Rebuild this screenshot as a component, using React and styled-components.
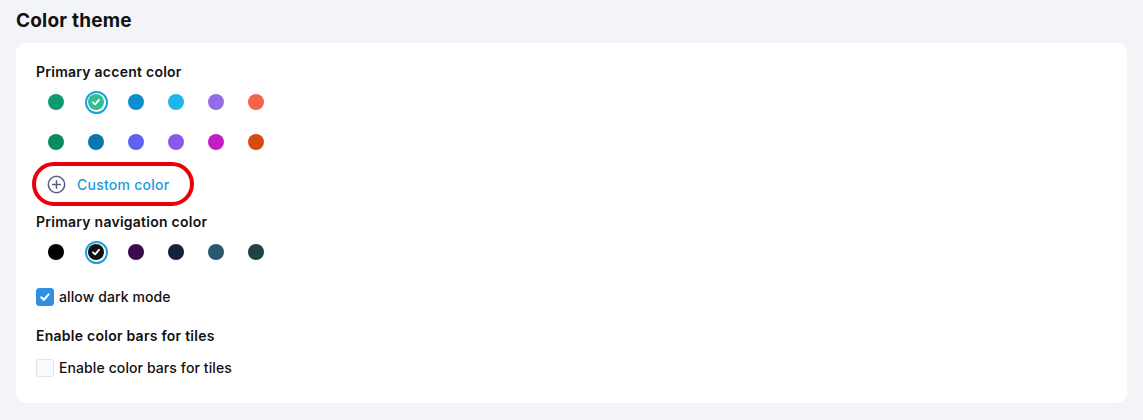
import React from 'react'
import styled, { createGlobalStyle } from 'styled-components'

const GlobalStyle = createGlobalStyle`
  body {
    margin: 0;
    background: #f3f4f8;
    font-family: Inter, "Liberation Sans", sans-serif;
    color: #111;
  }
`

const Page = styled.div`
  padding: 10px 16px 17px;
`

const Title = styled.h2`
  margin: 0 0 11px;
  font-size: 19px;
  font-weight: 700;
  line-height: 22px;
  letter-spacing: 0.2px;
`

const Card = styled.div`
  background: #fff;
  border-radius: 10px;
  padding: 19px 20px 25px;
`

const Label = styled.div`
  font-size: 14px;
  font-weight: 600;
  line-height: 20px;
  letter-spacing: 0.25px;
  margin-top: ${p => p.$top || 0}px;
`

const SwatchGrid = styled.div`
  display: grid;
  grid-template-columns: repeat(6, 40px);
  grid-auto-rows: 40px;
`

const SwatchCell = styled.div`
  display: flex;
  align-items: center;
  justify-content: center;
`

const Dot = styled.span`
  width: 16px;
  height: 16px;
  border-radius: 50%;
  background: ${p => p.$color};
  display: flex;
  align-items: center;
  justify-content: center;
`

const Ring = styled.span`
  width: 23px;
  height: 23px;
  border-radius: 50%;
  box-sizing: border-box;
  border: 2px solid #1ba0e0;
  padding: 1.5px;
  display: flex;
  align-items: center;
  justify-content: center;
  & > span {
    width: 16px;
    height: 16px;
  }
`

const CustomButton = styled.button`
  display: flex;
  align-items: center;
  gap: 11px;
  width: fit-content;
  height: 44px;
  box-sizing: border-box;
  margin: 0 0 6px -4px;
  padding: 0 21px 0 11px;
  border: 4px solid #e8000b;
  border-radius: 22px;
  background: #fff;
  color: #1a9be0;
  font-family: inherit;
  font-size: 14px;
  font-weight: 500;
  letter-spacing: 0.25px;
  cursor: pointer;
`

const CheckRow = styled.label`
  display: flex;
  align-items: center;
  gap: 5px;
  font-size: 14px;
  font-weight: 500;
  line-height: 20px;
  letter-spacing: 0.1px;
  margin-top: ${p => p.$top || 0}px;
`

const Box = styled.span`
  width: 18px;
  height: 18px;
  box-sizing: border-box;
  border-radius: 3px;
  display: flex;
  align-items: center;
  justify-content: center;
  background: ${p => (p.$checked ? '#2f8fe0' : '#fafbfc')};
  border: 1px solid ${p => (p.$checked ? '#2f8fe0' : '#e1e3ea')};
`

const Tick = ({ size = 10 }) => (
  <svg width={size} height={size} viewBox="0 0 10 10">
    <path d="M2 5.3 L4.1 7.3 L8 2.8" fill="none" stroke="#fff" strokeWidth="1.8" strokeLinecap="round" strokeLinejoin="round" />
  </svg>
)

const PlusCircle = () => (
  <svg width="19" height="19" viewBox="0 0 20 20">
    <circle cx="10" cy="10" r="8.6" fill="none" stroke="#5a5e87" strokeWidth="1.6" />
    <path d="M10 6 V14 M6 10 H14" stroke="#5a5e87" strokeWidth="1.6" strokeLinecap="round" />
  </svg>
)

const accentColors = [
  '#0e9a6f', '#2ec08f', '#0a8fcc', '#1fb5e8', '#946be8', '#f4634a',
  '#0b8a64', '#0877ad', '#5f62f0', '#8b58e9', '#c11ec4', '#d64a0f',
]

const navColors = ['#000000', '#111111', '#3b0a4f', '#14233b', '#2a5870', '#1d4345']

function Swatches({ colors, selected }) {
  return (
    <SwatchGrid>
      {colors.map((c, i) => (
        <SwatchCell key={c + i}>
          {i === selected ? (
            <Ring>
              <Dot $color={c}><Tick size={10} /></Dot>
            </Ring>
          ) : (
            <Dot $color={c} />
          )}
        </SwatchCell>
      ))}
    </SwatchGrid>
  )
}

export default function App() {
  return (
    <Page>
      <GlobalStyle />
      <Title>Color theme</Title>
      <Card>
        <Label>Primary accent color</Label>
        <Swatches colors={accentColors} selected={1} />
        <CustomButton>
          <PlusCircle />
          Custom color
        </CustomButton>
        <Label>Primary navigation color</Label>
        <Swatches colors={navColors} selected={1} />
        <CheckRow $top={15}>
          <Box $checked><Tick size={12} /></Box>
          allow dark mode
        </CheckRow>
        <Label $top={19}>Enable color bars for tiles</Label>
        <CheckRow $top={12}>
          <Box />
          Enable color bars for tiles
        </CheckRow>
      </Card>
    </Page>
  )
}
